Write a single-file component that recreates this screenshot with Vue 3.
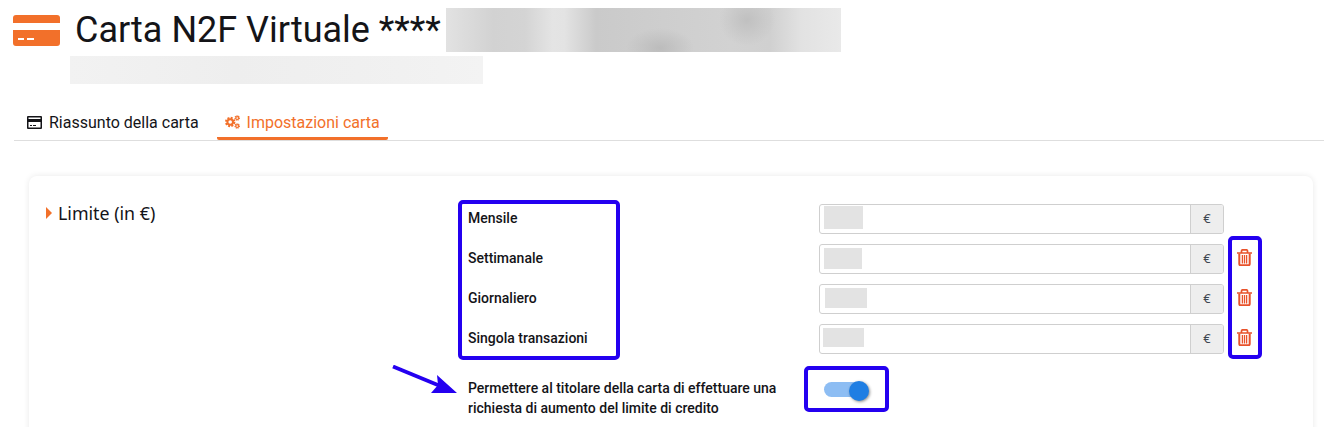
<script setup>
const rows = [
  { label: 'Mensile', blur: 39, height: 23, top: 1, shift: 0, removable: false },
  { label: 'Settimanale', blur: 38, height: 21, top: 3, shift: 0, removable: true },
  { label: 'Giornaliero', blur: 42, height: 20, top: 3, shift: 1, removable: true },
  { label: 'Singola transazioni', blur: 41, height: 19, top: 3, shift: -1, removable: true }
]
</script>

<template>
  <div class="page">
    <header class="head">
      <svg class="card-icon" viewBox="0 0 47 31">
        <path d="M0 3a3 3 0 0 1 3-3h41a3 3 0 0 1 3 3v5H0z" />
        <path fill-rule="evenodd" d="M0 15h47v13a3 3 0 0 1-3 3H3a3 3 0 0 1-3-3zM5 23v2h6v-2zM14 23v2h7v-2z" />
      </svg>
      <h1 class="title">Carta N2F Virtuale ****</h1>
      <div class="title-blur"></div>
    </header>
    <div class="sub-blur"></div>

    <nav class="tabs">
      <div class="tab">
        <svg class="tab-icon" viewBox="0 0 15 13">
          <path fill-rule="evenodd" d="M1 0h13a1 1 0 0 1 1 1v11a1 1 0 0 1-1 1H1a1 1 0 0 1-1-1V1a1 1 0 0 1 1-1zM1.5 1.5V3h12V1.500zM1.500 6v5.500h12V6zM3 9h2v1H3zM6 9h3v1H6z" />
        </svg>
        Riassunto della carta
      </div>
      <div class="tab active">
        <svg class="tab-icon gears" viewBox="0 0 15 14">
          <circle class="gear-teeth" cx="5.2" cy="7" r="4.1" />
          <circle class="gear-ring" cx="5.2" cy="7" r="2.8" />
          <circle class="small-teeth" cx="12.2" cy="3" r="2.1" />
          <circle class="small-ring" cx="12.2" cy="3" r="1.4" />
          <circle class="small-teeth" cx="12.2" cy="11" r="2.1" />
          <circle class="small-ring" cx="12.2" cy="11" r="1.4" />
        </svg>
        Impostazioni carta
      </div>
    </nav>

    <section class="card">
      <h2 class="section-title"><span class="caret"></span>Limite (in €)</h2>
      <div class="form">
        <div v-for="row in rows" :key="row.label" class="row">
          <label class="label">{{ row.label }}</label>
          <div class="input">
            <div class="value">
              <span
                class="value-blur"
                :style="{ width: row.blur + 'px', height: row.height + 'px', marginTop: row.top + 'px', marginLeft: row.shift + 'px' }"
              ></span>
            </div>
            <span class="unit">€</span>
          </div>
          <svg v-if="row.removable" class="trash" viewBox="0 0 15 17">
            <path d="M0 4h15M4.500 3.600V2a1.200 1.200 0 0 1 1.200-1.200h3.600A1.200 1.200 0 0 1 10.500 2v1.600" fill="none" stroke-width="1.700" />
            <path d="M2.300 4.500v10.500a1.200 1.200 0 0 0 1.200 1.200h8a1.200 1.200 0 0 0 1.200-1.200V4.500" fill="none" stroke-width="2" />
            <path d="M5.400 6v8.500M7.500 6v8.500M9.600 6v8.500" fill="none" stroke-width="1.300" />
          </svg>
        </div>
        <div class="row permit">
          <label class="label">Permettere al titolare della carta di effettuare una richiesta di aumento del limite di credito</label>
          <div class="switch"><span class="knob"></span></div>
        </div>

        <div class="mark mark-labels"></div>
        <div class="mark mark-trash"></div>
        <div class="mark mark-switch"></div>
        <svg class="arrow" viewBox="0 0 66 38">
          <path d="M1 1.500 47 20.500" fill="none" stroke="#2400f0" stroke-width="3.800" />
          <path d="M65 28 39 28 46 20 45 10z" fill="#2400f0" />
        </svg>
      </div>
    </section>
  </div>
</template>

<style scoped>
.page {
  height: 427px;
  overflow: hidden;
  font-family: Roboto, "Liberation Sans", sans-serif;
  color: #141418;
  background: #fff;
}

.head {
  display: flex;
  align-items: center;
  height: 44px;
  padding: 8px 0 0 13px;
}

.card-icon {
  width: 47px;
  height: 31px;
  fill: #f2702a;
  flex: none;
}

.title {
  margin: 0 0 0 15px;
  font-size: 36px;
  font-weight: 400;
  line-height: 44px;
  white-space: nowrap;
}

.title-blur {
  width: 395px;
  height: 44px;
  margin-left: 5px;
  background:
    radial-gradient(ellipse 34px 20px at 214px 40px, #bcbcbc, transparent),
    radial-gradient(ellipse 28px 26px at 301px 12px, #c0c0c0, transparent),
    linear-gradient(90deg, #e2e2e2 0, #d2d2d2 12%, #d4d4d4 20%, #e4e4e4 27%, #e3e3e3 30%, #cacaca 38%, #cecece 55%, #d2d2d2 72%, #d0d0d0 82%, #e2e2e2 90%, #e9e9e9 100%);
}

.sub-blur {
  width: 413px;
  height: 28px;
  margin: 4px 0 0 70px;
  background: linear-gradient(90deg, #f2f2f2, #eeeeee 40%, #f0f0f0 70%, #f3f3f3);
}

.tabs {
  display: flex;
  gap: 7px;
  height: 40px;
  margin: 16px 0 0 14px;
  border-bottom: 1px solid #dedede;
  box-sizing: content-box;
}

.tab {
  display: flex;
  align-items: center;
  gap: 7px;
  height: 39px;
  margin-top: 1px;
  padding: 6px 11px 0 13px;
  font-size: 16px;
  box-sizing: border-box;
  border-bottom: 3px solid transparent;
}

.tab.active {
  padding: 6px 8px 0;
  color: #f2702a;
  border-bottom-color: #f2702a;
  border-radius: 0 0 2px 2px;
}

.tab-icon {
  width: 15px;
  height: 13px;
  flex: none;
  fill: #141418;
}

.gears {
  height: 14px;
  fill: none;
}

.gear-teeth {
  stroke: #f2702a;
  stroke-width: 2.200;
  stroke-dasharray: 1.900 1.320;
}

.gear-ring {
  stroke: #f2702a;
  stroke-width: 2;
}

.small-teeth {
  stroke: #f2702a;
  stroke-width: 1.300;
  stroke-dasharray: 1 .650;
}

.small-ring {
  stroke: #f2702a;
  stroke-width: 1.100;
}

.card {
  display: flex;
  min-height: 280px;
  margin: 35px 11px 0 29px;
  padding: 28px 16px 0 17px;
  border-radius: 8px;
  background: #fff;
  box-shadow: 0 0 6px rgba(0, 0, 0, .09);
}

.section-title {
  display: flex;
  align-items: center;
  width: 422px;
  height: 18px;
  margin: 0;
  flex: none;
  font-family: "Noto Sans", "Open Sans", sans-serif;
  font-size: 17.800px;
  font-weight: 400;
}

.caret {
  width: 0;
  height: 0;
  margin-right: 6px;
  border-left: 6px solid #f2702a;
  border-top: 6px solid transparent;
  border-bottom: 6px solid transparent;
}

.form {
  position: relative;
  flex: 1;
}

.row {
  display: flex;
  align-items: center;
  height: 30px;
  margin-bottom: 10px;
}

.label {
  width: 351px;
  margin-top: -2px;
  flex: none;
  font-size: 14px;
  font-weight: 500;
  line-height: 20px;
}

.input {
  display: flex;
  width: 405px;
  height: 30px;
  box-sizing: border-box;
  border: 1px solid #cfcfcf;
  border-radius: 3px;
  flex: none;
}

.value {
  flex: 1;
  padding-left: 4px;
}

.value-blur {
  display: block;
  background: #e3e3e3;
}

.unit {
  width: 32px;
  border-left: 1px solid #cfcfcf;
  background: #eeeeee;
  text-align: center;
  font-family: "Noto Sans", sans-serif;
  font-size: 13px;
  line-height: 27px;
  color: #3f4650;
  border-radius: 0 2px 2px 0;
}

.trash {
  width: 15px;
  height: 17px;
  margin: -3px 0 0 13px;
  stroke: #e8522a;
  flex: none;
}

.permit {
  height: 40px;
  margin-top: 24px;
}

.permit .label {
  width: 320px;
  margin: 0 31px 0 0;
}

.switch {
  position: relative;
  align-self: flex-start;
  width: 40px;
  height: 15px;
  margin: 4px 0 0 5px;
  border-radius: 8px;
  background: #8dbdf3;
}

.knob {
  position: absolute;
  top: -1px;
  right: -5px;
  width: 20px;
  height: 20px;
  border-radius: 50%;
  background: #1f7ee3;
  box-shadow: 1px 1px 3px rgba(0, 0, 0, .45);
}

.mark {
  position: absolute;
  box-sizing: border-box;
  border: 4px solid #2400f0;
  border-radius: 5px;
}

.mark-labels {
  left: -10px;
  top: -4px;
  width: 162px;
  height: 160px;
}

.mark-trash {
  left: 760px;
  top: 32px;
  width: 34px;
  height: 123px;
}

.mark-switch {
  left: 336px;
  top: 162px;
  width: 85px;
  height: 46px;
}

.arrow {
  position: absolute;
  left: -76px;
  top: 161px;
  width: 66px;
  height: 38px;
}
</style>

<style>
html, body {
  overflow: hidden;
}
</style>
